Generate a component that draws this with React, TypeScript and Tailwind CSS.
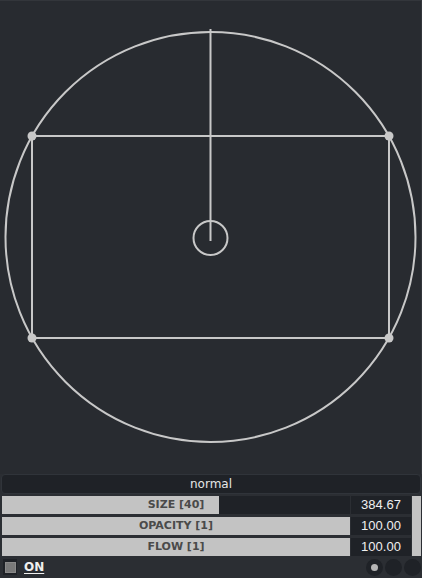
import React from "react";

const sliders = [
  { label: "SIZE [40]", fill: 217, value: "384.67" },
  { label: "OPACITY [1]", fill: 348, value: "100.00" },
  { label: "FLOW [1]", fill: 348, value: "100.00" },
];

function Canvas() {
  const stroke = "#c8c8c8";
  return (
    <svg width="421" height="473" viewBox="0 0 421 473" className="block">
      <circle cx="210.5" cy="236" r="205" fill="none" stroke={stroke} strokeWidth="2" />
      <rect x="32" y="135" width="357" height="202" fill="none" stroke={stroke} strokeWidth="2" />
      <line x1="210.5" y1="28" x2="210.5" y2="240" stroke={stroke} strokeWidth="2" />
      <circle cx="210.5" cy="237" r="17" fill="none" stroke={stroke} strokeWidth="2" />
      <circle cx="32" cy="135" r="4.5" fill={stroke} />
      <circle cx="389" cy="135" r="4.5" fill={stroke} />
      <circle cx="32" cy="337" r="4.5" fill={stroke} />
      <circle cx="389" cy="337" r="4.5" fill={stroke} />
    </svg>
  );
}

export default function App() {
  return (
    <div
      className="flex h-[578px] w-[422px] flex-col overflow-hidden bg-[#2b2e33]"
      style={{ fontFamily: "Tahoma, 'DejaVu Sans', 'Liberation Sans', sans-serif" }}
    >
      <div className="h-[474px] shrink-0 border-t border-r border-[#33363b] bg-[#282b30]">
        <Canvas />
      </div>

      <div className="mx-[1px] flex h-[20px] shrink-0 items-center justify-center rounded-sm border border-[#30343a] bg-[#1f2227] text-[12px] text-[#e6e6e6]">
        normal
      </div>

      <div className="mt-[2px] flex gap-[1px] pl-[2px]">
        <div className="flex w-[409px] flex-col gap-[3px]">
          {sliders.map((s) => (
            <div key={s.label} className="flex h-[18px] gap-[1px]">
              <div className="relative w-[348px] bg-[#1f2227]">
                <div className="h-full bg-[#c3c3c3]" style={{ width: s.fill }} />
                <div className="absolute inset-0 flex items-center justify-center text-[11px] font-bold text-[#4a4a4a]">
                  {s.label}
                </div>
              </div>
              <div className="flex w-[60px] items-center justify-center bg-[#1f2227] font-['Liberation_Sans',sans-serif] text-[13px] text-[#f0f0f0]">
                {s.value}
              </div>
            </div>
          ))}
        </div>
        <div className="w-[9px] bg-[#c3c3c3]" />
      </div>

      <div className="flex flex-1 items-center pl-[3px]">
        <div className="flex h-[16px] w-[14px] items-center justify-center bg-[#1f2227]">
          <div className="h-[11px] w-[11px] border border-[#8a8a8a] bg-[#7a7a7a]" />
        </div>
        <span className="ml-[7px] text-[12px] font-bold text-[#f0f0f0] underline decoration-1 underline-offset-2">ON</span>
        <div className="ml-auto flex items-center gap-[2px] pr-[1px]">
          <div className="flex h-[17px] w-[17px] items-center justify-center rounded-full bg-[#1f2227]">
            <div className="h-[7px] w-[7px] rounded-full bg-[#b5b5b5]" />
          </div>
          <div className="h-[17px] w-[17px] rounded-full bg-[#1f2227]" />
          <div className="h-[17px] w-[17px] rounded-full bg-[#1f2227]" />
        </div>
      </div>
    </div>
  );
}
